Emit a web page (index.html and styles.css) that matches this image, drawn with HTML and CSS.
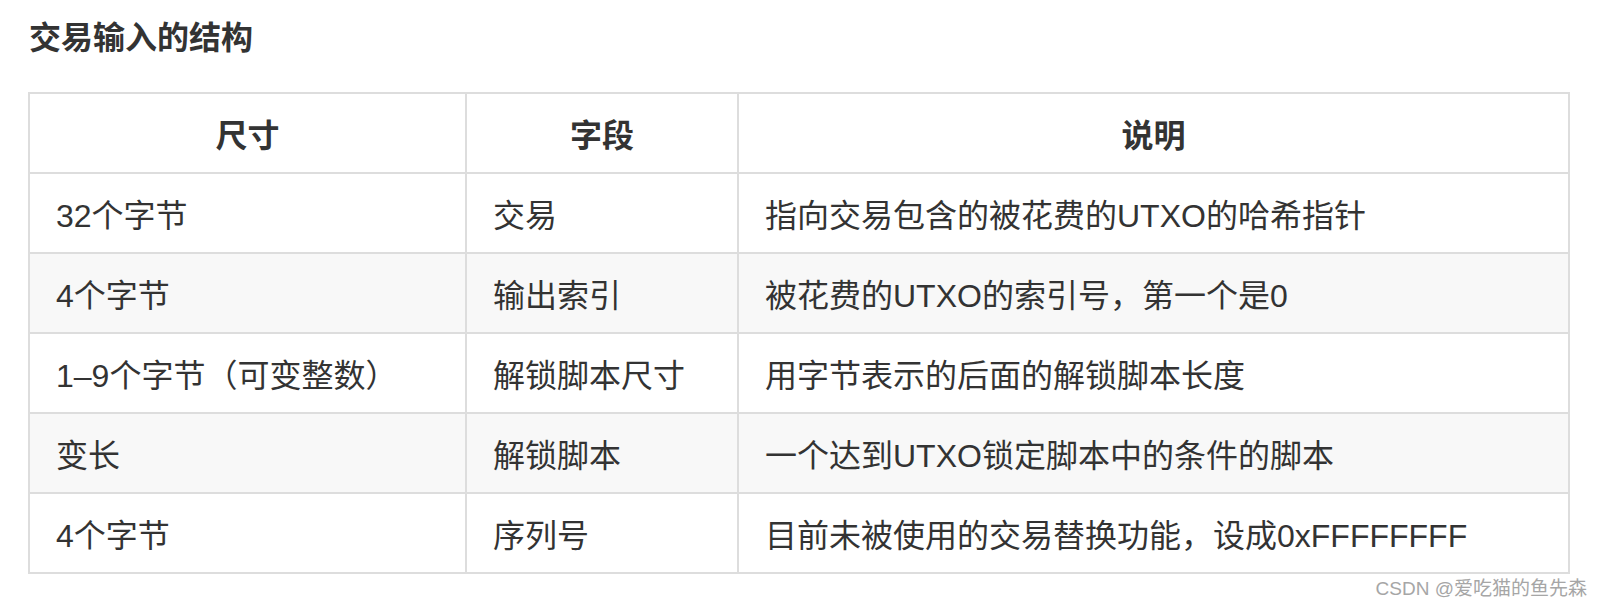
FILE: index.html
```html
<!DOCTYPE html>
<html lang="zh-CN">
<head>
<meta charset="utf-8">
<title>交易输入的结构</title>
<link rel="stylesheet" href="styles.css">
</head>
<body>
<main class="page">
  <h2 class="title">交易输入的结构</h2>
  <table class="grid">
    <colgroup>
      <col class="col-size">
      <col class="col-field">
      <col class="col-desc">
    </colgroup>
    <thead>
      <tr><th>尺寸</th><th>字段</th><th>说明</th></tr>
    </thead>
    <tbody>
      <tr><td>32个字节</td><td>交易</td><td>指向交易包含的被花费的UTXO的哈希指针</td></tr>
      <tr><td>4个字节</td><td>输出索引</td><td>被花费的UTXO的索引号，第一个是0</td></tr>
      <tr><td>1–9个字节（可变整数）</td><td>解锁脚本尺寸</td><td>用字节表示的后面的解锁脚本长度</td></tr>
      <tr><td>变长</td><td>解锁脚本</td><td>一个达到UTXO锁定脚本中的条件的脚本</td></tr>
      <tr><td>4个字节</td><td>序列号</td><td>目前未被使用的交易替换功能，设成0xFFFFFFFF</td></tr>
    </tbody>
  </table>
  <div class="watermark">CSDN @爱吃猫的鱼先森</div>
</main>
</body>
</html>
```
FILE: styles.css
```css
html, body {
  margin: 0;
  padding: 0;
  background: #fff;
}
body {
  width: 1600px;
  height: 606px;
  overflow: hidden;
  font-family: "Liberation Sans", "Noto Sans CJK SC", sans-serif;
  color: #333;
}
.page {
  position: relative;
  height: 606px;
  padding: 14px 0 0 28px;
  box-sizing: border-box;
}
.title {
  margin: 0 0 30px 1px;
  font-size: 32px;
  line-height: 48px;
  font-weight: bold;
  color: #333;
}
.grid {
  border-collapse: collapse;
  table-layout: fixed;
  width: 1540px;
  font-size: 32px;
}
.col-size { width: 437px; }
.col-field { width: 272px; }
.col-desc { width: 831px; }
.grid th,
.grid td {
  border: 2px solid #ddd;
  height: 80px;
  padding: 0 26px;
  box-sizing: border-box;
  vertical-align: middle;
  white-space: nowrap;
}
.grid th {
  text-align: center;
  font-weight: bold;
}
.grid td {
  text-align: left;
  font-weight: normal;
}
.grid tbody tr:nth-child(even) {
  background: #f8f8f8;
}
.watermark {
  position: absolute;
  right: 13px;
  bottom: 4px;
  font-size: 19px;
  line-height: 26px;
  color: #a6a6a6;
  text-shadow: 0 0 1px #fff;
}
```
